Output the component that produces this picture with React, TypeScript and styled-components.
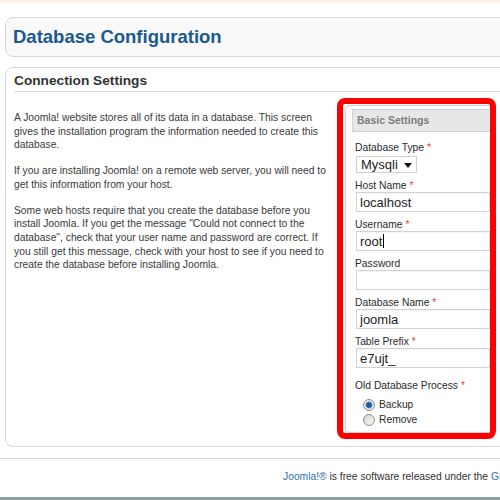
import React from 'react';
import styled, { createGlobalStyle } from 'styled-components';

const GlobalStyle = createGlobalStyle`
  html, body {
    margin: 0;
    padding: 0;
    overflow: hidden;
    background: #ffffff;
  }
  body {
    font-family: "Liberation Sans", Arial, sans-serif;
    color: #333;
  }
`;

const fields = [
  { label: 'Host Name', value: 'localhost', required: true },
  { label: 'Username', value: 'root', required: true, caret: true },
  { label: 'Password', value: '', required: false },
  { label: 'Database Name', value: 'joomla', required: true },
  { label: 'Table Prefix', value: 'e7ujt_', required: true },
];

const App: React.FC = () => {
  return (
    <>
      <GlobalStyle />
      <Page>
        <TopStrip />

        <HeaderBox>
          <Title>Database Configuration</Title>
        </HeaderBox>

        <ConnectionBox>
          <SectionTitle>Connection Settings</SectionTitle>
          <Columns>
            <Intro>
              <p>
                A Joomla! website stores all of its data in a database. This screen gives the
                installation program the information needed to create this database.
              </p>
              <p>
                If you are installing Joomla! on a remote web server, you will need to get this
                information from your host.
              </p>
              <p>
                Some web hosts require that you create the database before you install Joomla. If
                you get the message "Could not connect to the database", check that your user name
                and password are correct. If you still get this message, check with your host to
                see if you need to create the database before installing Joomla.
              </p>
            </Intro>

            <Highlight>
              <Fieldset>
                <LegendBar>Basic Settings</LegendBar>
                <Fields>
                  <Label $first>
                    Database Type <Req>*</Req>
                  </Label>
                  <SelectBox>
                    <span>Mysqli</span>
                    <svg width="8" height="5" viewBox="0 0 8 5">
                      <path d="M0 0h8L4 5z" fill="#111" />
                    </svg>
                  </SelectBox>

                  {fields.map((f) => (
                    <React.Fragment key={f.label}>
                      <Label>
                        {f.label} {f.required && <Req>*</Req>}
                      </Label>
                      <TextInput>
                        {f.value}
                        {f.caret && <Caret />}
                      </TextInput>
                    </React.Fragment>
                  ))}

                  <Label $gap={11}>
                    Old Database Process <Req>*</Req>
                  </Label>
                  <RadioList>
                    <RadioRow>
                      <RadioDot $checked />
                      Backup
                    </RadioRow>
                    <RadioRow>
                      <RadioDot />
                      Remove
                    </RadioRow>
                  </RadioList>
                </Fields>
              </Fieldset>
            </Highlight>
          </Columns>
        </ConnectionBox>

        <Footer>
          <Link>Joomla!®</Link> is free software released under the{' '}
          <Link>GNU General Public License.</Link>
        </Footer>
        <BottomBand />
      </Page>
    </>
  );
};

export default App;

const Page = styled.div`
  width: 900px;
  height: 500px;
  display: flex;
  flex-direction: column;
`;

const TopStrip = styled.div`
  height: 3px;
  background: #fdf2ee;
`;

const HeaderBox = styled.div`
  box-sizing: border-box;
  height: 40px;
  margin: 14px 0 0 5px;
  border: 1px solid #d9d9d9;
  border-radius: 8px;
  background: #f9f9f9;
  padding-left: 7px;
  display: flex;
  align-items: center;
`;

const Title = styled.h1`
  margin: 0;
  font-size: 18.5px;
  font-weight: bold;
  color: #195a8f;
  line-height: 1;
  padding-top: 1px;
`;

const ConnectionBox = styled.div`
  box-sizing: border-box;
  height: 380px;
  margin: 10px 0 0 5px;
  border: 1px solid #d9d9d9;
  border-radius: 8px;
  background: #ffffff;
  padding: 0 8px;
`;

const SectionTitle = styled.h2`
  margin: 0;
  padding-top: 3px;
  line-height: 20px;
  font-size: 13.7px;
  font-weight: bold;
  color: #333;
  border-bottom: 1px solid #dcdcdc;
`;

const Columns = styled.div`
  display: flex;
  gap: 7px;
  margin-top: 6px;
`;

const Intro = styled.div`
  width: 316px;
  padding-top: 13px;
  font-size: 10.3px;
  line-height: 13.7px;
  color: #3a3a3a;

  p {
    margin: 0 0 12px;
  }
`;

const Highlight = styled.div`
  box-sizing: border-box;
  width: 159px;
  height: 341px;
  border: 6px solid #ff0000;
  border-radius: 8px;
  overflow: hidden;
  padding: 1px 0 0 2px;
`;

const Fieldset = styled.div`
  box-sizing: border-box;
  height: 100%;
  border: 1px solid #cfcfcf;
  border-right: none;
  border-radius: 5px 0 0 5px;
  padding: 3px 0 0 6px;
`;

const LegendBar = styled.div`
  box-sizing: border-box;
  height: 23px;
  line-height: 21px;
  background: #e7e7e7;
  border: 1px solid #d3d3d3;
  border-right: none;
  padding-left: 4px;
  font-size: 10.5px;
  font-weight: bold;
  color: #7d7d7d;
`;

const Fields = styled.div`
  display: flex;
  flex-direction: column;
  align-items: flex-start;
  padding-left: 3px;
`;

const Label = styled.div<{ $first?: boolean; $gap?: number }>`
  margin-top: ${(p) => (p.$first ? 9 : p.$gap ?? 6)}px;
  height: 13px;
  line-height: 13px;
  font-size: 10.3px;
  color: #2b2b2b;
`;

const Req = styled.span`
  color: #e8423c;
`;

const SelectBox = styled.div`
  box-sizing: border-box;
  margin: 2px 0 0 1px;
  width: 61px;
  height: 17px;
  border: 1px solid #cfcfcf;
  background: #fff;
  display: flex;
  align-items: center;
  justify-content: space-between;
  padding: 0 4px 0 4px;
  font-size: 13px;
  color: #222;

  svg {
    margin-top: 1px;
  }
`;

const TextInput = styled.div`
  box-sizing: border-box;
  margin-left: 1px;
  width: 134px;
  height: 20px;
  border: 1px solid #d2d2d2;
  box-shadow: inset 0 1px 1px rgba(0, 0, 0, 0.04);
  background: #fff;
  padding-left: 3px;
  display: flex;
  align-items: center;
  font-size: 13px;
  color: #222;
`;

const Caret = styled.span`
  display: inline-block;
  width: 1px;
  height: 14px;
  background: #000;
  margin-left: 1px;
`;

const RadioList = styled.div`
  margin-top: 5px;
  padding-left: 8px;
  display: flex;
  flex-direction: column;
`;

const RadioRow = styled.div`
  height: 15px;
  display: flex;
  align-items: center;
  gap: 4px;
  font-size: 10.3px;
  color: #2b2b2b;
`;

const RadioDot = styled.span<{ $checked?: boolean }>`
  box-sizing: border-box;
  width: 12px;
  height: 12px;
  border-radius: 50%;
  border: 1px solid #8c8c8c;
  background: ${(p) =>
    p.$checked
      ? 'radial-gradient(circle, #1b5a98 0, #1b5a98 2.2px, #6c9bcc 3.2px, #e4e4e4 3.8px, #f7f7f7 100%)'
      : 'linear-gradient(135deg, #d4d4d4, #f7f7f7)'};
`;

const Footer = styled.div`
  margin-top: 11px;
  border-top: 1px solid #d8d8d8;
  flex: 1;
  padding: 11px 0 0 283px;
  font-size: 10.3px;
  line-height: 13px;
  color: #333;
  white-space: nowrap;
`;

const Link = styled.span`
  color: #2f6fb3;
`;

const BottomBand = styled.div`
  height: 3px;
  background: #8fa0a0;
`;
